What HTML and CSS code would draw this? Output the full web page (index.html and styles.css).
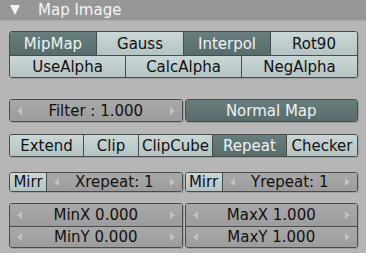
FILE: index.html
```html
<!DOCTYPE html>
<html lang="en">
<head>
  <meta charset="UTF-8" />
  <title>Map Image</title>
  <link rel="stylesheet" href="styles.css">
</head>
<body>
  <div class="panel">
    <div class="header"><span class="tri"></span>Map Image</div>

    <div class="content">
      <div class="block top-block">
        <div class="row h23">
          <div class="btn on">MipMap</div>
          <div class="btn">Gauss</div>
          <div class="btn on">Interpol</div>
          <div class="btn">Rot90</div>
        </div>
        <div class="row h22">
          <div class="btn">UseAlpha</div>
          <div class="btn">CalcAlpha</div>
          <div class="btn">NegAlpha</div>
        </div>
      </div>

      <div class="pair filter-pair">
        <div class="block">
          <div class="row h21">
            <div class="num"><span class="arr left"></span>Filter : 1.000<span class="arr right"></span></div>
          </div>
        </div>
        <div class="block">
          <div class="row h21">
            <div class="btn on">Normal Map</div>
          </div>
        </div>
      </div>

      <div class="block ext-block">
        <div class="row h21">
          <div class="btn w73">Extend</div>
          <div class="btn w55">Clip</div>
          <div class="btn w74">ClipCube</div>
          <div class="btn on w74">Repeat</div>
          <div class="btn w73">Checker</div>
        </div>
      </div>

      <div class="pair mirr-pair">
        <div class="block">
          <div class="row h18">
            <div class="btn mirr">Mirr</div>
            <div class="num"><span class="arr left"></span>Xrepeat: 1<span class="arr right"></span></div>
          </div>
        </div>
        <div class="block">
          <div class="row h18">
            <div class="btn mirr">Mirr</div>
            <div class="num"><span class="arr left"></span>Yrepeat: 1<span class="arr right"></span></div>
          </div>
        </div>
      </div>

      <div class="pair crop-pair">
        <div class="block">
          <div class="row h22">
            <div class="num"><span class="arr left"></span>MinX 0.000<span class="arr right"></span></div>
          </div>
          <div class="row h21">
            <div class="num"><span class="arr left"></span>MinY 0.000<span class="arr right"></span></div>
          </div>
        </div>
        <div class="block">
          <div class="row h22">
            <div class="num"><span class="arr left"></span>MaxX 1.000<span class="arr right"></span></div>
          </div>
          <div class="row h21">
            <div class="num"><span class="arr left"></span>MaxY 1.000<span class="arr right"></span></div>
          </div>
        </div>
      </div>
    </div>
  </div>
</body>
</html>
```

FILE: styles.css
```css
* {
  margin: 0;
  padding: 0;
  box-sizing: border-box;
}

body {
  background-color: #b6b6b6;
  font-family: 'DejaVu Sans', 'Liberation Sans', sans-serif;
  font-size: 15px;
}

.panel {
  width: 366px;
  height: 253px;
  background-color: #b6b6b6;
  overflow: hidden;
}

.header {
  height: 21px;
  background-color: #979797;
  border-bottom: 1px solid #a9a9a9;
  color: #f4f4f4;
  display: flex;
  align-items: center;
  padding-left: 10px;
  line-height: 20px;
}

.tri {
  width: 0;
  height: 0;
  border-left: 5px solid transparent;
  border-right: 5px solid transparent;
  border-top: 10px solid #f4f4f4;
  margin-right: 18px;
}

.content {
  padding: 0 8px 0 9px;
  display: flex;
  flex-direction: column;
}

.block {
  border: 1px solid #454d4d;
  border-radius: 3px;
  overflow: hidden;
  display: flex;
  flex-direction: column;
  box-shadow: 1px 1px 0 rgba(0, 0, 0, 0.12);
}

.top-block {
  margin-top: 10px;
}

.row {
  display: flex;
}

.row + .row {
  border-top: 1px solid #454d4d;
}

.h23 { height: 23px; }
.h22 { height: 22px; }
.h21 { height: 21px; }
.h18 { height: 18px; }

.btn {
  flex: 1;
  display: flex;
  align-items: center;
  justify-content: center;
  color: #111;
  background: linear-gradient(#cbd7d7, #b4c3c3);
  white-space: nowrap;
}

.btn + .btn,
.btn + .num {
  border-left: 1px solid #454d4d;
}

.btn.on {
  color: #eef3f3;
  background: linear-gradient(#687d7d, #586c6c);
}

.w73 { flex: 0 0 73px; }
.w55 { flex: 0 0 55px; }
.w74 { flex: 0 0 74px; }
.w73:last-child { flex: 1; }

.mirr {
  flex: 0 0 36px;
}

.num {
  flex: 1;
  display: flex;
  align-items: center;
  justify-content: center;
  color: #111;
  background: linear-gradient(#a9a9a9, #9c9c9c);
  position: relative;
  white-space: nowrap;
}

.arr {
  position: absolute;
  top: 50%;
  margin-top: -4px;
  width: 0;
  height: 0;
  border-top: 4px solid transparent;
  border-bottom: 4px solid transparent;
}

.arr.left {
  left: 7px;
  border-right: 5px solid #c2c2c2;
}

.arr.right {
  right: 7px;
  border-left: 5px solid #c2c2c2;
}

.pair {
  display: flex;
  gap: 2px;
}

.pair .block {
  flex: 1;
}

.filter-pair {
  margin-top: 21px;
}

.ext-block {
  margin-top: 12px;
}

.mirr-pair {
  margin-top: 15px;
}

.crop-pair {
  margin-top: 11px;
}
```
